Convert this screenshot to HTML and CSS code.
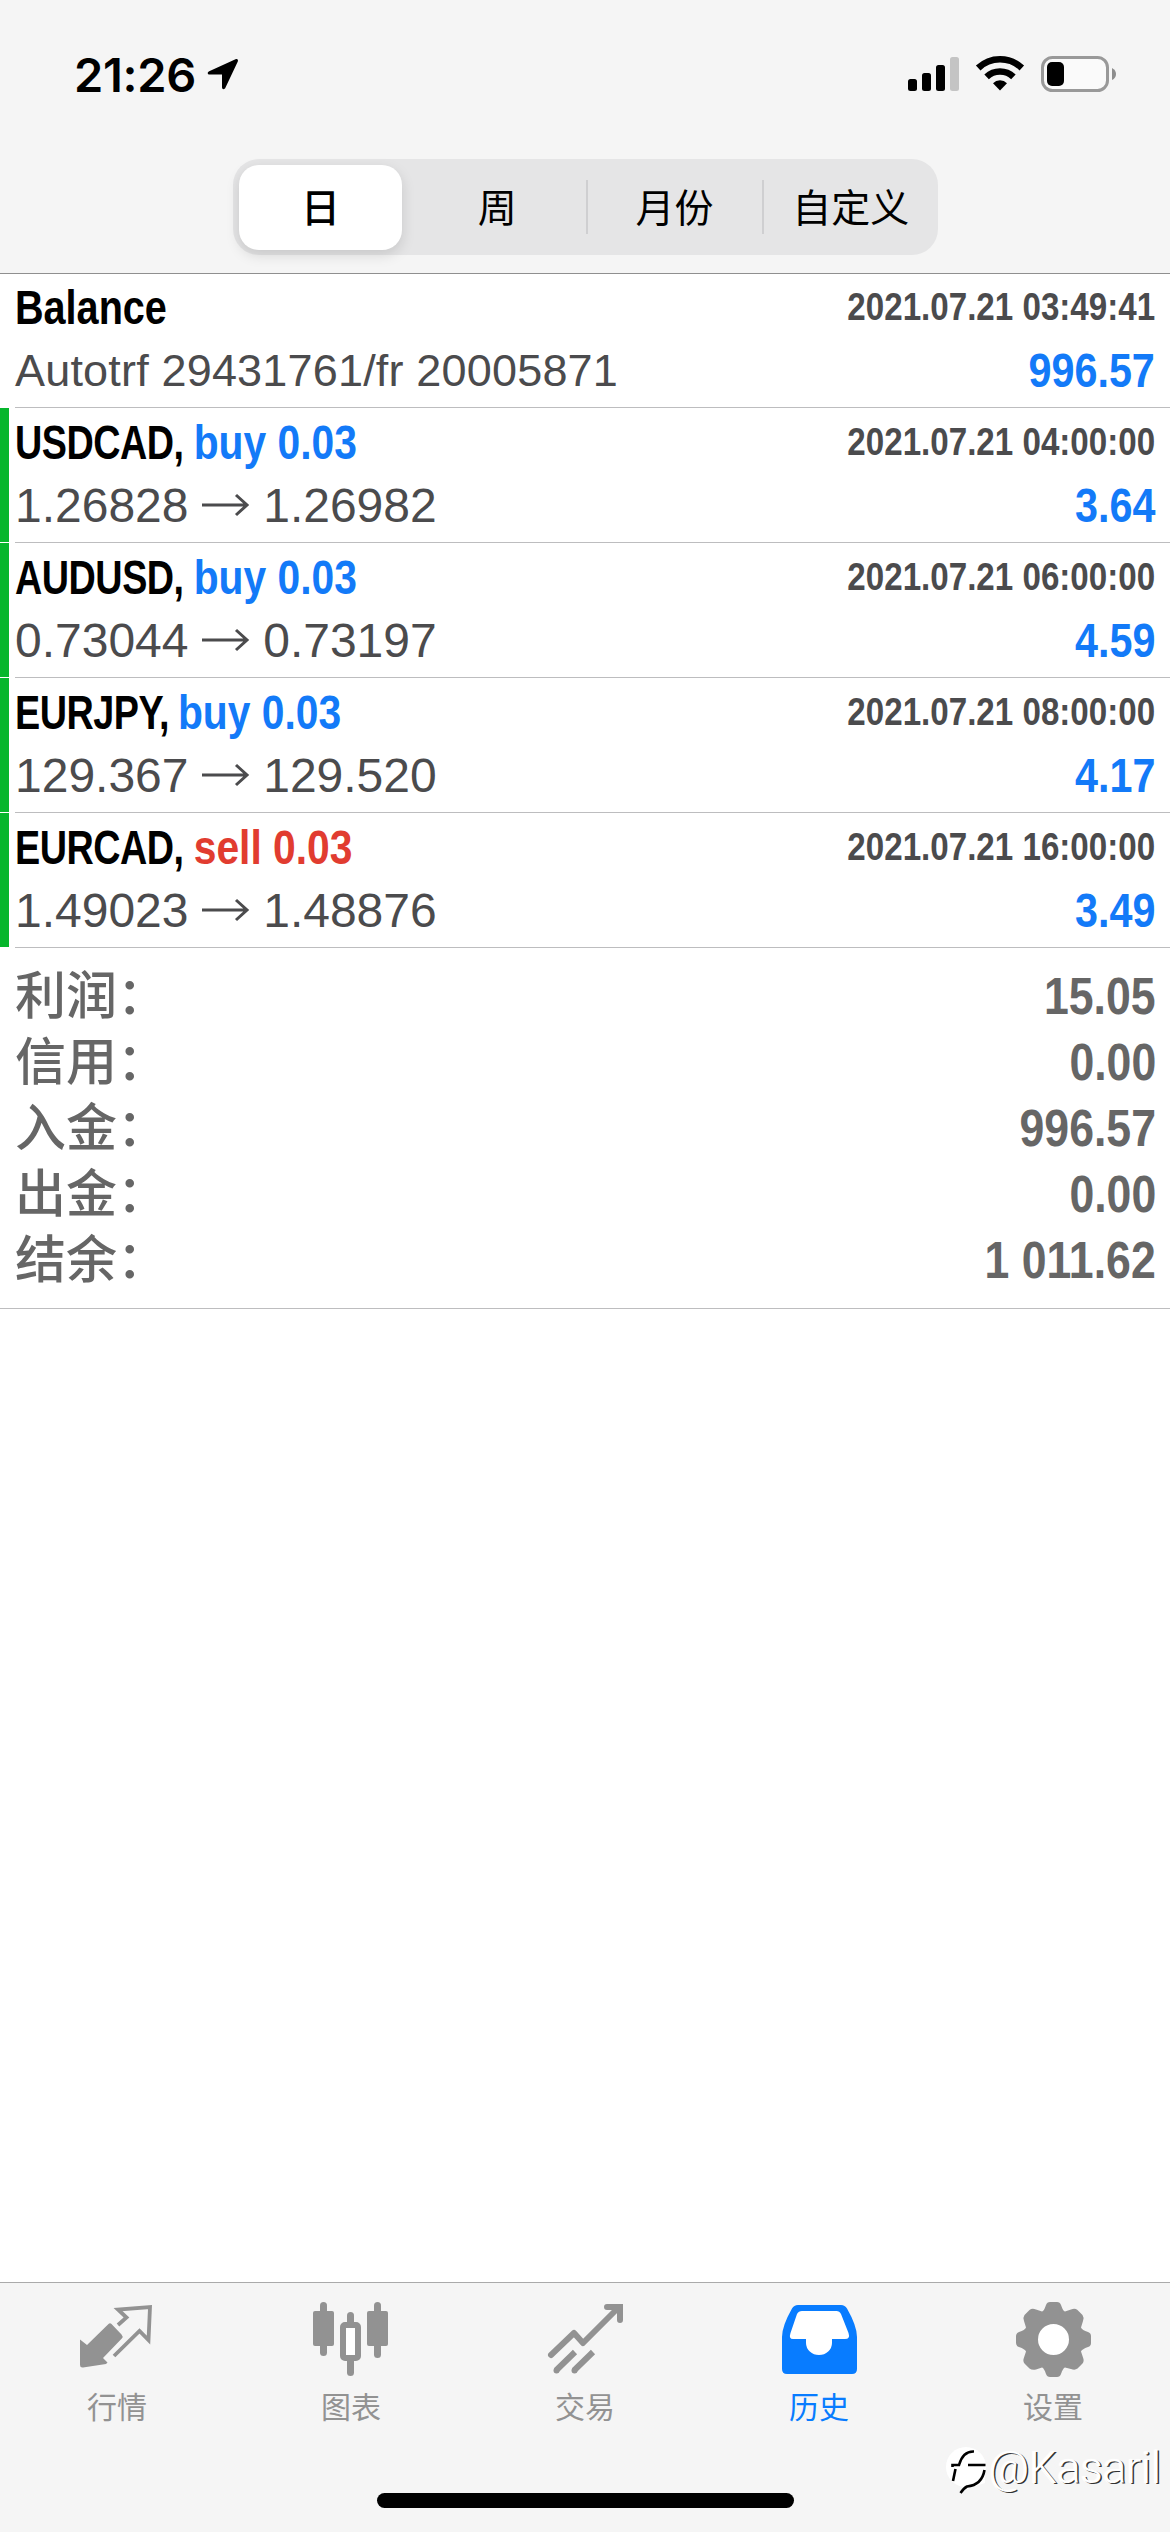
FILE: index.html
```html
<!DOCTYPE html>
<html lang="zh-CN">
<head>
<meta charset="utf-8">
<title>历史</title>
<link rel="stylesheet" href="styles.css">
</head>
<body>
<div class="screen">
  <header class="header">
    <div class="status">
      <span class="time">21:26</span>
      <svg class="locate" width="32" height="32" viewBox="0 0 32 32"><path d="M28.5 1.2 2.2 13.2C0 14.2.4 16.5 2.6 16.5H15V29.3C15 31.6 17.4 32 18.4 29.8L30.8 3.5C31.5 1.6 30.3.4 28.5 1.2Z"/></svg>
      <svg class="indicators" width="210" height="40" viewBox="0 0 210 40">
        <rect x="2" y="25" width="9" height="12" rx="2.5"/><rect x="16" y="19" width="9" height="18" rx="2.5"/><rect x="30" y="11" width="9" height="26" rx="2.5"/><rect x="44" y="3" width="9" height="34" rx="2.5" fill="#c4c4c4"/>
        <path d="M94 36.5 87 29.2A10 10 0 0 1 101 29.2Z"/>
        <g fill="none" stroke="#000" stroke-width="6.6"><path d="M80.6 22.8A19.5 19.5 0 0 1 107.4 22.8"/><path d="M72.2 14A31.5 31.5 0 0 1 115.800 14"/></g>
        <rect x="136.5" y="3.500" width="65" height="33" rx="10" fill="#fff" fill-opacity=".5" stroke="#999" stroke-width="3"/>
        <rect x="141" y="8" width="17" height="24" rx="5"/>
        <path d="M206 14Q210 16 210 20T206 26Z" fill="#8d8d8d"/>
      </svg>
    </div>
    <div class="segments">
      <div class="segment active">日</div><div class="segment">周</div><div class="segment split">月份</div><div class="segment split">自定义</div>
    </div>
  </header>

  <main class="history">
    <section class="deal plain">
      <div class="line"><span class="title balance">Balance</span><span class="date">2021.07.21 03:49:41</span></div>
      <div class="line second"><span class="note">Autotrf 29431761/fr 20005871</span><span class="profit">996.57</span></div>
    </section>
    <section class="deal">
      <div class="line"><span class="title"><span class="symbol">USDCAD, </span><span class="buy">buy 0.03</span></span><span class="date">2021.07.21 04:00:00</span></div>
      <div class="line second"><span class="prices">1.26828 <svg class="arrow" viewBox="0 0 48 34"><path d="M0 17H45M34 7 45 17 34 27"/></svg> 1.26982</span><span class="profit">3.64</span></div>
    </section>
    <section class="deal">
      <div class="line"><span class="title"><span class="symbol">AUDUSD, </span><span class="buy">buy 0.03</span></span><span class="date">2021.07.21 06:00:00</span></div>
      <div class="line second"><span class="prices">0.73044 <svg class="arrow" viewBox="0 0 48 34"><path d="M0 17H45M34 7 45 17 34 27"/></svg> 0.73197</span><span class="profit">4.59</span></div>
    </section>
    <section class="deal">
      <div class="line"><span class="title"><span class="symbol">EURJPY, </span><span class="buy">buy 0.03</span></span><span class="date">2021.07.21 08:00:00</span></div>
      <div class="line second"><span class="prices">129.367 <svg class="arrow" viewBox="0 0 48 34"><path d="M0 17H45M34 7 45 17 34 27"/></svg> 129.520</span><span class="profit">4.17</span></div>
    </section>
    <section class="deal">
      <div class="line"><span class="title"><span class="symbol">EURCAD, </span><span class="sell">sell 0.03</span></span><span class="date">2021.07.21 16:00:00</span></div>
      <div class="line second"><span class="prices">1.49023 <svg class="arrow" viewBox="0 0 48 34"><path d="M0 17H45M34 7 45 17 34 27"/></svg> 1.48876</span><span class="profit">3.49</span></div>
    </section>
    <section class="totals">
      <div class="total"><span>利润：</span><span class="sum">15.05</span></div>
      <div class="total"><span>信用：</span><span class="sum">0.00</span></div>
      <div class="total"><span>入金：</span><span class="sum">996.57</span></div>
      <div class="total"><span>出金：</span><span class="sum">0.00</span></div>
      <div class="total"><span>结余：</span><span class="sum">1 011.62</span></div>
    </section>
  </main>

  <footer class="footer">
    <nav class="tabs">
      <div class="tab">
        <svg viewBox="0 0 76 76"><path d="M1 38.500 8 44 29.500 23Q31 21.500 32.500 23L42.500 33.500Q44.500 35.500 42.800 37.500L24 57 28.500 61.500 27 63 4 66.500Q1 66.800 1 64Z"/><path d="M39 24 47.500 16.500 39 8.500 71 6 69.500 39 60.500 30 35 55" fill="none" stroke="currentColor" stroke-width="3.800"/></svg>
        <span>行情</span>
      </div>
      <div class="tab">
        <svg viewBox="0 0 76 76"><g><rect x="0" y="10" width="21" height="35" rx="2"/><rect x="7" y="1" width="7" height="54" rx="3.500"/><rect x="54" y="10" width="21" height="35" rx="2"/><rect x="61" y="1" width="7" height="56" rx="3.500"/><rect x="34" y="11" width="7" height="15" rx="3.500"/><rect x="34" y="54" width="7" height="21" rx="3.500"/></g><rect x="30" y="24" width="15" height="33" rx="2" fill="#fff" stroke="currentColor" stroke-width="6"/></svg>
        <span>图表</span>
      </div>
      <div class="tab">
        <svg viewBox="0 0 76 76"><g fill="none" stroke="currentColor" stroke-width="6"><path d="M4 54 27 32 36 42 70 8" stroke-linejoin="round" stroke-linecap="round"/><path d="M60 6H73V19" stroke-linecap="round"/><path d="M28 51 9 69.500M46 51 27 69.500"/></g><circle cx="9.500" cy="69.500" r="3"/><circle cx="27.500" cy="69.500" r="3"/></svg>
        <span>交易</span>
      </div>
      <div class="tab current">
        <svg viewBox="0 0 76 76"><path d="M17 8H60L71 37 62 45 38 58 14 45 5 37Z" fill="#fff"/><path fill-rule="evenodd" d="M17 4H60Q64 4 66 7.500 76 25 76 36V68Q76 73 71 73H6Q1 73 1 68V36Q1 25 11 7.500 13 4 17 4ZM21 10Q17.500 10 16 13L9.500 32Q7.500 38 12 38H25V42A13 12 0 0 0 51 42V38H64Q69.500 38 67.500 32L60 13Q58.500 10 55.500 10Z"/></svg>
        <span>历史</span>
      </div>
      <div class="tab">
        <svg viewBox="0 0 76 76"><circle cx="38.500" cy="38.500" r="17" fill="#fff"/><path fill-rule="evenodd" d="M35 1H42Q45 1 46 4 48 10 50 10.500L56 8.500Q60 7 62.500 9L67.500 14Q69.500 17 68 20L66 26.500Q67 29 73 31 76 32 76 35V42Q76 45 73 46 67 48 66 50.500L68 56.500Q69.500 60 67.500 62.500L62.500 67.500Q60 69.500 56 68L50 66.500Q48 67 46 73 45 76 42 76H35Q32 76 31 73 29 67 27 66.500L21 68.500Q17 69.500 14.500 67.500L9.500 62.500Q7.500 60 9 56.500L11 50.500Q10 48 4 46 1 45 1 42V35Q1 32 4 31 10 29 11 26.500L9 20Q7.500 17 9.500 14L14.500 9Q17 7 21 8.500L27 10.500Q29 10 31 4 32 1 35 1ZM38.500 23A15.500 15.500 0 1 0 38.500 54 15.500 15.500 0 1 0 38.500 23Z"/></svg>
        <span>设置</span>
      </div>
    </nav>
    <div class="home"></div>
    <div class="watermark">
      <svg width="42" height="48" viewBox="0 0 42 48"><circle cx="20" cy="20" r="20" fill="#fff"/><path d="M14 45 19 39Q34 36 39 22V36L24 41Z" fill="#fff"/><g fill="none" stroke="#000" stroke-width="2.600"><path d="M6.500 20V18H13Q17 4 28 4.500M22 18H39.500M38.500 23Q36 38 21 39.500 18 41 14.500 46" /><path d="M9.500 22 7 34"/></g></svg>
      <span>@Kasaril</span>
    </div>
  </footer>
</div>
</body>
</html>
```

FILE: styles.css
```css
* { box-sizing: border-box; }
body { margin: 0; background: #fff; font-family: "Liberation Sans", "Noto Sans CJK SC", sans-serif; }
.screen { width: 1170px; height: 2532px; display: flex; flex-direction: column; background: #fff; overflow: hidden; }
.header { height: 274px; background: #f5f5f5; border-bottom: 1px solid #8f8f8f; }
.status { height: 159px; padding: 53px 54px 0 74px; display: flex; align-items: flex-start; }
.time { font: 600 47px/44px Inter, sans-serif; width: 133px; letter-spacing: -.3px; }
.locate { margin-top: 5px; }
.indicators { margin: 1px 0 0 auto; }
.segments { width: 705px; height: 96px; margin-left: 233px; border-radius: 26px; background: #e5e5e6; display: grid; grid-template-columns: repeat(4, 1fr); font: 400 39px/92px "Noto Sans CJK SC", sans-serif; text-align: center; align-items: center; }
.segment { height: 96px; }
.segment.active { height: 85px; width: 163px; margin-left: 6px; border-radius: 20px; background: #fff; line-height: 81px; font-weight: 500; box-shadow: 0 5px 14px rgba(0,0,0,.13); }
.segment.split { height: 54px; line-height: 50px; border-left: 2px solid #cfcfd1; }

.history { flex: 1; }
.deal { height: 135px; padding: 5px 15px 0 6px; border-left: 9px solid #06b62c; position: relative; }
.deal::after { content: ""; position: absolute; left: -9px; right: 0; bottom: 0; height: 1px; background: linear-gradient(to right, #fff 15px, #bdbdbf 15px); }
.deal.plain { height: 134px; padding-top: 4px; border-left-color: transparent; }
.line { height: 60px; display: flex; justify-content: space-between; line-height: 60px; white-space: pre; }
.line.second { height: 66px; line-height: 66px; }
.title { font-size: 48px; font-weight: 700; transform: scaleX(.85); transform-origin: left; }
.title.balance { transform: scaleX(.825); }
.symbol { display: inline-block; letter-spacing: -.6px; transform: scaleX(.925); transform-origin: left; margin-right: -17px; }
.buy { color: #137af8; }
.sell { color: #e13c30; }
.date { font-size: 39px; line-height: 58px; font-weight: 700; color: #4b4b4d; transform: scaleX(.85); transform-origin: right; }
.note { font-size: 45px; letter-spacing: .18px; color: #4b4b4d; }
.prices { font-size: 48px; color: #4b4b4d; }
.arrow { width: 48px; height: 34px; fill: none; stroke: #4b4b4d; stroke-width: 3; }
.profit { font-size: 48px; font-weight: 700; color: #137af8; transform: scaleX(.86); transform-origin: right; }
.totals { height: 361px; padding: 16px 14px 0 15px; border-bottom: 1px solid #bdbdbf; }
.total { height: 66px; display: flex; justify-content: space-between; font: 500 51px/66px "Liberation Sans", "Noto Sans CJK SC", sans-serif; color: #666; }
.sum { font-weight: 700; transform: scaleX(.875); transform-origin: right; }

.footer { height: 250px; background: #f5f5f5; border-top: 1px solid #aaa; position: relative; }
.tabs { display: grid; grid-template-columns: repeat(5, 1fr); padding-top: 18px; color: #929292; }
.tab { display: flex; flex-direction: column; align-items: center; font: 400 30px/44px "Noto Sans CJK SC", sans-serif; }
.tab svg { width: 76px; height: 76px; fill: currentColor; margin-bottom: 6px; }
.tab.current { color: #087cff; }
.home { width: 417px; height: 15px; border-radius: 8px; background: #000; margin: 66px auto 0; }
.watermark { position: absolute; left: 946px; top: 164px; display: flex; }
.watermark span { font: 300 44px/42px Roboto, sans-serif; color: #fff; margin-left: 1px; text-shadow: 1.5px .5px 0 #333, -1px 0 1px #fff; }
```
